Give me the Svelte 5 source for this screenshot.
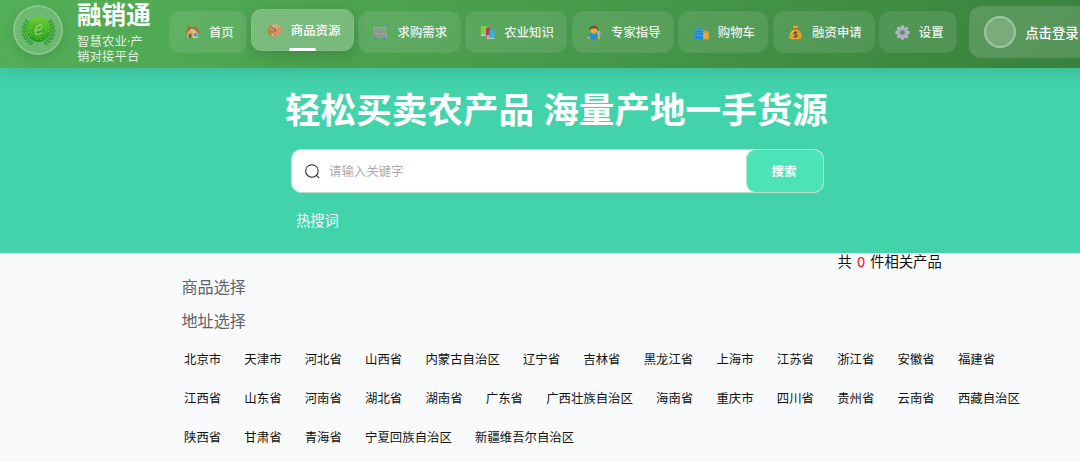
<script lang="ts">
  type NavItem = { icon: string; label: string; active?: boolean }

  const navItems: NavItem[] = [
    { icon: 'home', label: '首页' },
    { icon: 'box', label: '商品资源', active: true },
    { icon: 'cart', label: '求购需求' },
    { icon: 'books', label: '农业知识' },
    { icon: 'farmer', label: '专家指导' },
    { icon: 'bags', label: '购物车' },
    { icon: 'money', label: '融资申请' },
    { icon: 'gear', label: '设置' },
  ]

  const provinces = [
    '北京市', '天津市', '河北省', '山西省', '内蒙古自治区', '辽宁省', '吉林省',
    '黑龙江省', '上海市', '江苏省', '浙江省', '安徽省', '福建省', '江西省',
    '山东省', '河南省', '湖北省', '湖南省', '广东省', '广西壮族自治区', '海南省',
    '重庆市', '四川省', '贵州省', '云南省', '西藏自治区', '陕西省', '甘肃省',
    '青海省', '宁夏回族自治区', '新疆维吾尔自治区',
  ]

  // laurel leaves on both sides of the emblem
  const leaves = [-38, -24, -10, 4, 18, 32, 46, 60]
  const teeth = [0, 45, 90, 135, 180, 225, 270, 315]

  let keyword = $state('')
  let total = $state(0)
</script>

{#snippet icon(name: string)}
  <svg class="icon" viewBox="0 0 16 16">
    {#if name === 'home'}
      <path fill="#f5c58d" d="M2.5 7.5 7 3.5l6.5 4.5v6.5h-11z" />
      <path fill="#e8a467" d="M2.5 8 5.5 5.5l3 3v6h-6z" />
      <path fill="#e3483f" d="M.6 8 5.4 2l6-.1L15.6 8l-1.3.8-4-5.2-4 .3-4.6 5z" />
      <path fill="#d23c36" d="M3 1.5h2v3.2L3 6.5z" />
      <path fill="#8a5038" d="M4 9.5h3v5H4z" />
      <path fill="#2b9ff0" d="M9.5 8.6h3.3v3.3H9.5z" />
      <path fill="#37c46a" d="M.5 14h15v1.4H.5z" />
    {:else if name === 'box'}
      <path fill="#efa77b" d="M.7 4.3 9 .7l6.3 3-8.5 4z" />
      <path fill="#c77850" d="m.7 4.3 6.1 3.4v7.8L1 11.8z" />
      <path fill="#dd8f63" d="m6.8 7.7 8.5-4-.3 7.8-8.2 4z" />
      <path fill="#8c4b38" d="m3.4 3.1 6 3.2v3l-1.5.9V7L2.2 3.7z" />
      <path fill="#ffe1d5" d="m5 11 1.3.8v2L5 13z" />
    {:else if name === 'cart'}
      <path fill="#8d9788" fill-opacity=".55" d="M1 2.6h12.2v7.6H1.6z" />
      <path fill="none" stroke="#b3a0b5" stroke-width="1.1" d="M.8 2.6h12.4v7.6H1.6zM4 3v7M7.2 3v7M10.3 3v7" />
      <path fill="none" stroke="#b3a0b5" stroke-width="1.2" d="M15 1.8h-1.6V10l1.2 2.6H2" />
      <path fill="#388eff" d="M13.8 .9H16v1.5h-2.2z" />
      <circle cx="2.8" cy="14" r="1.1" fill="#3c7df0" />
      <circle cx="12.6" cy="14" r="1.1" fill="#3c7df0" />
    {:else if name === 'books'}
      <path fill="#83d747" d="M.8 1h7.4v9.8H.8z" />
      <path fill="#d5c9ee" d="M1 10h7.2v1.7H1z" />
      <path fill="#db2456" d="M6.4 3h4.5v10H7.5l-1.1-1z" />
      <path fill="#f4d8ec" d="m7 11.5 3-.6.4 1.5-3 .6z" />
      <path fill="#20b7f5" d="M10.4 5.2h5v9l-6 .3z" />
      <path fill="#d5c9ee" d="M7.4 13.5h8v1.4h-8z" />
    {:else if name === 'farmer'}
      <path fill="#149cb2" d="M1 15.2v-3.6q0-3.6 4-3.6h4.2q4 0 4 3.6v3.6z" />
      <circle cx="7.2" cy="5.4" r="3.8" fill="#f7ae37" />
      <path fill="#7e3d33" d="M2.8 6.2Q1.6.8 7.2.8t4.6 5L10 3.6H5z" />
      <path fill="#2784e8" d="M4.4 9.5h5.6v5.8H4.4z" />
      <path fill="#f7ae37" d="m5.4 8 1.8 2L9 8zM.8 12.2H3v2.9H.8z" />
      <path fill="#c5a4d2" d="M10.5 6.4h4v3.2l-1.2 1h-1.6l-1.2-1z" />
      <path fill="#ffc145" d="M11.8 10.6h1.8v4.7h-1.8z" />
    {:else if name === 'bags'}
      <path fill="none" stroke="#3c9fe8" d="M3 5V3.5Q3 .8 5.6.8t2.6 2.7V5" />
      <path fill="#349cf1" d="M.8 4h9.8l.6 11.2H.2z" />
      <path stroke="#1d6fd2" stroke-width=".9" d="M.7 7h10M.6 9.4h10" />
      <path fill="#1c86e7" d="M.4 11.8h10.5v3.4H.2z" />
      <path fill="#faab35" d="M10 6h5.3l.5 9.3H9.6z" />
      <path fill="none" stroke="#da742b" stroke-width=".8" d="M11.4 6v1.8q1.5 1.7 2.8 0V6" />
    {:else if name === 'money'}
      <path fill="#f4a52b" d="M5 .8h6L9.8 4.2q5.4 3.8 5.1 8.4-.2 2.6-3 2.6H4.2q-3 0-3-2.6Q1 8 6.2 4.2z" />
      <path fill="#ffc64a" d="M6 5.2Q2.9 7.2 2.4 11 4.4 7.5 8 7z" />
      <path fill="#b94e35" d="M5 3.5h6v1.3H5z" />
      <path fill="none" stroke="#70402f" stroke-width="1.1" d="M10 8.2q-3.5-1.5-3.8.6 0 1 2 1.3 2 .4 1.7 1.6-.5 1.9-3.9.6M8 6.6v7" />
    {:else}
      <g fill="#cdbde6">
        {#each teeth as angle}
          <path d="m6.5.5 3 0 .7 4H5.8z" transform="rotate({angle} 8 8)" />
        {/each}
      </g>
      <circle cx="8" cy="8" r="4" fill="none" stroke="#c5b4df" stroke-width="3" />
      <circle cx="8" cy="8" r="2.7" fill="none" stroke="#9a8cb5" stroke-width=".7" />
    {/if}
  </svg>
{/snippet}

<header class="header">
  <div class="brand">
    <div class="logo">
      <svg viewBox="0 0 40 40">
        <defs>
          <linearGradient id="seal" x2="0" y2="1">
            <stop offset="0" stop-color="#6ccc2c" />
            <stop offset="1" stop-color="#1a9a1e" />
          </linearGradient>
        </defs>
        <g fill="#369b34">
          {#each leaves as angle}
            <g transform="rotate({angle} 20 20)">
              <ellipse cx="37" cy="20" rx=".9" ry="2.3" transform="rotate(30 37 20)" />
              <ellipse cx="34.6" cy="20" rx=".9" ry="2.1" transform="rotate(-30 34.6 20)" />
            </g>
            <g transform="rotate({-angle} 20 20)">
              <ellipse cx="3" cy="20" rx=".9" ry="2.3" transform="rotate(-30 3 20)" />
              <ellipse cx="5.4" cy="20" rx=".9" ry="2.1" transform="rotate(30 5.4 20)" />
            </g>
          {/each}
        </g>
        <circle cx="20" cy="19" r="13.4" fill="url(#seal)" />
        <circle cx="20" cy="19" r="8.3" fill="none" stroke="#6fc046" stroke-width=".8" />
        <circle cx="20" cy="19" r="10.8" fill="none" stroke="#83c654" stroke-width="1.1" stroke-dasharray="1.4 2.8 1.4 2.8 1.4 6.7" transform="rotate(-126 20 19)" />
        <path fill="none" stroke="#8aca6e" stroke-width="1.8" d="M16.2 20.2q8.8-1 7.6-5-1.4-2.5-4.9.2-4 4.2-2 8 2.8 2.8 7.2-1.5" />
      </svg>
    </div>
    <div class="brand-text">
      <h1>融销通</h1>
      <p>智慧农业·产销对接平台</p>
    </div>
  </div>

  <nav class="nav">
    {#each navItems as item}
      <a class="nav-item" class:active={item.active} href="#/">
        <span class="nav-icon">{@render icon(item.icon)}</span>
        <span>{item.label}</span>
      </a>
    {/each}
  </nav>

  <div class="user">
    <div class="avatar"></div>
    <span>点击登录</span>
  </div>
</header>

<section class="banner">
  <h2>轻松买卖农产品 海量产地一手货源</h2>
  <div class="search">
    <svg class="search-icon" viewBox="0 0 16 16">
      <circle cx="7.4" cy="7.4" r="6.7" />
      <path d="m12 12 3 3" />
    </svg>
    <input type="text" placeholder="请输入关键字" bind:value={keyword} />
    <button>搜索</button>
  </div>
  <div class="hot">热搜词</div>
</section>

<main class="content">
  <div class="total">共 <em>{total}</em> 件相关产品</div>
  <h3>商品选择</h3>
  <h3>地址选择</h3>
  <ul class="provinces">
    {#each provinces as province}
      <li>{province}</li>
    {/each}
  </ul>
</main>

<style>
  :global(body) {
    background: #f8fafc;
    font-family: "Open Sans", "Noto Sans CJK SC", sans-serif;
    overflow: hidden;
  }
  h1, h2, h3, p, ul {
    margin: 0;
    padding: 0;
    font-weight: normal;
  }

  .header {
    position: relative;
    z-index: 1;
    display: flex;
    align-items: flex-start;
    box-sizing: border-box;
    width: 1120px;
    height: 68px;
    background: linear-gradient(135deg, #54b058 0%, #4a9f4d 40%, #387f3c 100%);
    box-shadow: 0 4px 18px rgba(0, 0, 0, .12);
    color: #fff;
  }
  .brand {
    display: flex;
    flex: none;
    width: 156.4px;
    padding-left: 13px;
    gap: 14px;
  }
  .logo {
    display: flex;
    align-items: center;
    justify-content: center;
    flex: none;
    box-sizing: border-box;
    width: 50px;
    height: 50px;
    margin-top: 5px;
    border: 2px solid rgba(255, 255, 255, .3);
    border-radius: 50%;
    background: rgba(255, 255, 255, .15);
    background-clip: padding-box;
    box-shadow: 0 3px 12px rgba(0, 0, 0, .12);
  }
  .logo svg {
    width: 37px;
    height: 37px;
  }
  .brand-text {
    width: 70px;
  }
  h1 {
    height: 30px;
    font-size: 24.6px;
    line-height: 30px;
    font-weight: 700;
    white-space: nowrap;
  }
  .brand p {
    margin-top: 4px;
    font-size: 12.4px;
    line-height: 15px;
    letter-spacing: .1px;
    color: rgba(255, 255, 255, .86);
  }

  .nav {
    display: flex;
    gap: 4.2px;
    padding-top: 11px;
  }
  .nav-item {
    position: relative;
    display: flex;
    align-items: center;
    gap: 8.2px;
    box-sizing: border-box;
    height: 42px;
    padding: 0 12.5px 0 14.3px;
    border: 1px solid rgba(255, 255, 255, .08);
    border-radius: 11px;
    background: rgba(255, 255, 255, .1);
    background-clip: padding-box;
    color: rgba(255, 255, 255, .9);
    font-size: 12.4px;
    font-weight: 500;
    white-space: nowrap;
    text-decoration: none;
  }
  .nav-icon {
    display: flex;
    width: 16px;
    opacity: .85;
  }
  .icon {
    width: 15px;
    height: 15px;
  }
  .active {
    transform: translateY(-2px);
    border-color: rgba(255, 255, 255, .3);
    background: rgba(255, 255, 255, .25);
    background-clip: padding-box;
    box-shadow: 0 5px 16px rgba(0, 0, 0, .15);
    color: #fff;
  }
  /* marker on the lower edge of the current page */
  .active::after {
    content: '';
    position: absolute;
    left: 50%;
    bottom: -1px;
    width: 27px;
    height: 3px;
    margin-left: -13.5px;
    border-radius: 2px;
    background: #fff;
  }

  .user {
    display: flex;
    align-items: center;
    gap: 9px;
    flex: none;
    box-sizing: border-box;
    width: 130px;
    height: 52px;
    margin: 6px 0 0 12px;
    padding-left: 14px;
    border: 1px solid rgba(255, 255, 255, .13);
    border-radius: 12px;
    background: rgba(255, 255, 255, .15);
    background-clip: padding-box;
    font-size: 13.4px;
    font-weight: 500;
    white-space: nowrap;
  }
  .avatar {
    box-sizing: border-box;
    width: 32px;
    height: 32px;
    border: 2px solid rgba(255, 255, 255, .3);
    border-radius: 50%;
    background: rgba(255, 255, 255, .2);
  }

  .banner {
    box-sizing: border-box;
    height: 184.5px;
    padding: 16px 0 0 285px;
    background: #42d3ab;
    color: #fff;
  }
  h2 {
    font-size: 35.6px;
    line-height: 50px;
    font-weight: 700;
    white-space: nowrap;
  }
  .search {
    display: flex;
    align-items: center;
    box-sizing: border-box;
    width: 533px;
    height: 44px;
    margin: 15px 0 0 6px;
    padding-left: 13px;
    border: 1px solid #b9dfd3;
    border-radius: 10px;
    background: #fff;
  }
  .search-icon {
    flex: none;
    width: 15px;
    height: 15px;
    fill: none;
    stroke: #222;
    stroke-width: 1.1;
  }
  .search input {
    flex: 1;
    min-width: 0;
    padding: 0 9px;
    border: 0;
    outline: 0;
    background: none;
    font: 12.4px "Noto Sans CJK SC", sans-serif;
  }
  .search input::placeholder {
    color: #a8abb2;
  }
  .search button {
    align-self: stretch;
    width: 77px;
    padding: 0 2px 0 0;
    border: 0;
    border-left: 1px solid #a5e3cf;
    border-radius: 9px;
    background: #4ce3b7;
    color: #fff;
    font: 700 12.4px "Noto Sans CJK SC", sans-serif;
  }
  .hot {
    margin: 18px 0 0 11px;
    font-size: 14.3px;
    line-height: 20px;
  }

  .content {
    padding-left: 181.5px;
  }
  .total {
    height: 19px;
    margin-left: 656px;
    font-size: 14.3px;
    line-height: 18px;
    word-spacing: 1.4px;
    color: #111;
  }
  .total em {
    font-style: normal;
    color: #f00;
  }
  h3 {
    height: 34px;
    font-size: 16.1px;
    line-height: 30px;
    color: #606266;
  }
  .provinces {
    display: flex;
    flex-wrap: wrap;
    width: 866px;
    column-gap: 23.2px;
    margin-left: 2.5px;
    list-style: none;
    font-size: 12.4px;
    line-height: 39px;
    color: #111;
  }
</style>
